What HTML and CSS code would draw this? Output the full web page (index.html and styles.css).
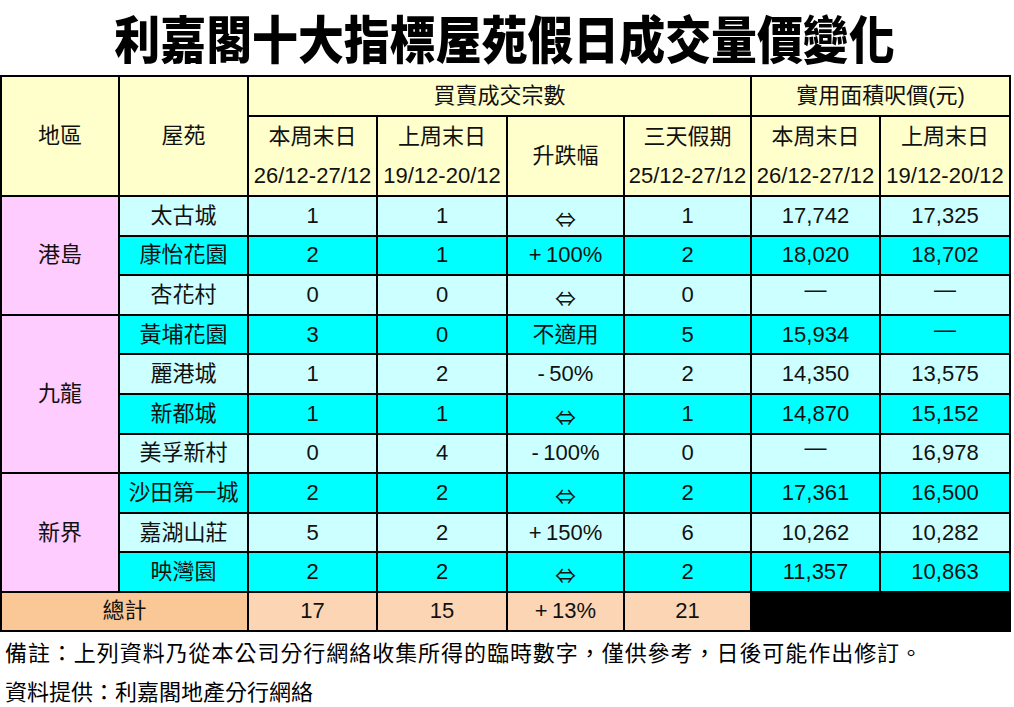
FILE: index.html
```html
<!DOCTYPE html>
<html lang="zh-Hant">
<head>
<meta charset="utf-8">
<title>利嘉閣十大指標屋苑假日成交量價變化</title>
<link rel="stylesheet" href="styles.css">
</head>
<body>
<h1 class="title"><span class="title-text">利嘉閣十大指標屋苑假日成交量價變化</span></h1>
<table class="stats">
  <colgroup>
    <col class="c-area"><col class="c-estate"><col class="c-n1"><col class="c-n2"><col class="c-n3"><col class="c-n4"><col class="c-p1"><col class="c-p2">
  </colgroup>
  <thead>
    <tr class="h1row">
      <th rowspan="2">地區</th>
      <th rowspan="2">屋苑</th>
      <th colspan="4">買賣成交宗數</th>
      <th colspan="2">實用面積呎價(元)</th>
    </tr>
    <tr class="h2row">
      <th><span class="l">本周末日</span><span class="l">26/12-27/12</span></th>
      <th><span class="l">上周末日</span><span class="l">19/12-20/12</span></th>
      <th>升跌幅</th>
      <th><span class="l">三天假期</span><span class="l">25/12-27/12</span></th>
      <th><span class="l">本周末日</span><span class="l">26/12-27/12</span></th>
      <th><span class="l">上周末日</span><span class="l">19/12-20/12</span></th>
    </tr>
  </thead>
  <tbody>
    <tr class="lt"><td class="area" rowspan="3">港島</td><td>太古城</td><td>1</td><td>1</td><td><span class="same">⇔</span></td><td>1</td><td>17,742</td><td>17,325</td></tr>
    <tr class="dk"><td>康怡花園</td><td>2</td><td>1</td><td>+&thinsp;100%</td><td>2</td><td>18,020</td><td>18,702</td></tr>
    <tr class="lt"><td>杏花村</td><td>0</td><td>0</td><td><span class="same">⇔</span></td><td>0</td><td><span class="dash">—</span></td><td><span class="dash">—</span></td></tr>
    <tr class="dk"><td class="area" rowspan="4">九龍</td><td>黃埔花園</td><td>3</td><td>0</td><td>不適用</td><td>5</td><td>15,934</td><td><span class="dash">—</span></td></tr>
    <tr class="lt"><td>麗港城</td><td>1</td><td>2</td><td>-&thinsp;50%</td><td>2</td><td>14,350</td><td>13,575</td></tr>
    <tr class="dk"><td>新都城</td><td>1</td><td>1</td><td><span class="same">⇔</span></td><td>1</td><td>14,870</td><td>15,152</td></tr>
    <tr class="lt"><td>美孚新村</td><td>0</td><td>4</td><td>-&thinsp;100%</td><td>0</td><td><span class="dash">—</span></td><td>16,978</td></tr>
    <tr class="dk"><td class="area" rowspan="3">新界</td><td>沙田第一城</td><td>2</td><td>2</td><td><span class="same">⇔</span></td><td>2</td><td>17,361</td><td>16,500</td></tr>
    <tr class="lt"><td>嘉湖山莊</td><td>5</td><td>2</td><td>+&thinsp;150%</td><td>6</td><td>10,262</td><td>10,282</td></tr>
    <tr class="dk"><td>映灣園</td><td>2</td><td>2</td><td><span class="same">⇔</span></td><td>2</td><td>11,357</td><td>10,863</td></tr>
  </tbody>
  <tfoot>
    <tr class="total">
      <td class="total-label" colspan="2">總計</td>
      <td>17</td><td>15</td><td>+&thinsp;13%</td><td>21</td>
      <td class="blank" colspan="2"></td>
    </tr>
  </tfoot>
</table>
<p class="note note-wide">備註：上列資料乃從本公司分行網絡收集所得的臨時數字，僅供參考，日後可能作出修訂。</p>
<p class="note">資料提供：利嘉閣地產分行網絡</p>
</body>
</html>
```
FILE: styles.css
```css
html, body {
  margin: 0;
  padding: 0;
  background: #ffffff;
}
body {
  font-family: "Liberation Sans", "Noto Sans CJK TC", sans-serif;
  color: #111;
}
.title {
  margin: 0;
  height: 75px;
  width: 1009px;
  display: flex;
  align-items: center;
  justify-content: center;
  font-family: "Noto Sans CJK TC", sans-serif;
  font-weight: 900;
  font-size: 51px;
  line-height: 1;
  color: #000;
}
.title-text {
  display: inline-block;
  transform: scaleX(0.9);
}
.stats {
  border-collapse: collapse;
  table-layout: fixed;
  width: 1009px;
  border: 2px solid #000;
  font-size: 22px;
}
.c-area { width: 118px; }
.c-estate { width: 129px; }
.c-n1 { width: 129px; }
.c-n2 { width: 130px; }
.c-n3 { width: 117px; }
.c-n4 { width: 127px; }
.c-p1 { width: 129px; }
.c-p2 { width: 130px; }
.stats th, .stats td {
  border: 2px solid #000;
  padding: 0;
  text-align: center;
  vertical-align: middle;
  white-space: nowrap;
  font-weight: normal;
  line-height: 24px;
}
.stats thead th {
  background: #ffffcc;
}
.h1row th { height: 38px; }
.h2row th { height: 76px; }
.h2row .l {
  display: block;
  line-height: 39px;
}
.stats tbody td { height: 37.6px; }
.stats .lt td { background: #ccffff; }
.stats .dk td { background: #00ffff; }
.stats td.area { background: #ffccff; }
.same {
  display: inline-block;
  font-family: "Noto Sans CJK TC", sans-serif;
  font-size: 21px;
  transform: translateY(3px);
}
.dash {
  display: inline-block;
  transform: translateY(-5px);
}
.total td {
  height: 37px;
  background: #fcd5b4;
}
.total td.total-label { background: #fac796; }
.total td.blank { background: #000; }
.note {
  margin: 0;
  padding-left: 5px;
  font-family: "Noto Sans CJK TC", sans-serif;
  font-size: 22px;
  line-height: 39px;
  color: #000;
}
.note-wide {
  letter-spacing: 0.95px;
}
```
